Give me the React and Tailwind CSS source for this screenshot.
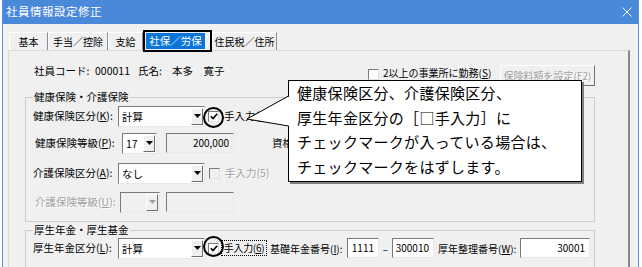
const jp = "font-['Noto_Sans_CJK_JP','Noto_Sans_CJK_SC',sans-serif]"

const Arrow = ({ gray }) => (
  <svg width="7" height="4" viewBox="0 0 7 4">
    <path d="M0 0h7L3.5 4z" fill={gray ? '#a0a0a0' : '#000'} />
  </svg>
)

const Sel = ({ className = '', text, disabled }) => (
  <div
    className={`flex h-[21px] border border-t-[#7a7a7a] border-l-[#7a7a7a] border-b-[#e8e8e8] border-r-[#e8e8e8] ${
      disabled ? 'bg-[#f0f0f0]' : 'bg-white'
    } ${className}`}
  >
    <div className="flex-1 pl-[3px] text-[10.5px] leading-[19px] whitespace-nowrap">{text}</div>
    <div className="w-[12px] my-[1px] mr-[1px] bg-[#f0f0f0] border border-t-white border-l-white border-b-[#6f6f6f] border-r-[#6f6f6f] flex items-center justify-center">
      <Arrow gray={disabled} />
    </div>
  </div>
)

const Check = ({ checked, disabled, className = '' }) => (
  <div
    className={`w-[11px] h-[11px] shrink-0 border border-t-[#7a7a7a] border-l-[#7a7a7a] border-b-[#e0e0e0] border-r-[#e0e0e0] ${
      disabled ? 'bg-[#f0f0f0]' : 'bg-white'
    } flex items-center justify-center ${className}`}
  >
    {checked && (
      <svg width="8" height="7" viewBox="0 0 8 7">
        <path d="M0.8 3.2 L3 5.6 L7.2 0.8" stroke="#000" strokeWidth="1.6" fill="none" />
      </svg>
    )}
  </div>
)

const Box = ({ className = '', text, gray }) => (
  <div
    className={`h-[20px] border border-t-[#7a7a7a] border-l-[#7a7a7a] border-b-[#e8e8e8] border-r-[#e8e8e8] ${
      gray ? 'bg-[#f0f0f0]' : 'bg-white'
    } text-right pr-[4px] text-[10px] leading-[18px] ${className}`}
  >
    {text}
  </div>
)

const Tab = ({ w, children }) => (
  <div
    className={`${w} mt-[2px] h-[18px] flex items-center justify-center whitespace-nowrap border-t border-l border-t-white border-l-white border-r border-r-[#8c8c8c] text-[10px]`}
  >
    {children}
  </div>
)

export default function App() {
  return (
    <div className={`w-[642px] h-[267px] bg-white relative overflow-hidden text-black ${jp}`}>
      <div className="ml-[2px] w-[637px] h-full bg-[#f0f0f0] border-x border-[#5a93dc] flex flex-col">
        {/* title bar */}
        <div className="h-[24px] shrink-0 bg-[#4a88da] flex items-center justify-between pl-[3px] pr-[6px]">
          <span className="text-white text-[11.5px] tracking-[0.5px]">社員情報設定修正</span>
          <svg width="10" height="10" viewBox="0 0 10 10">
            <path d="M0.5 0.5L9.5 9.5M9.5 0.5L0.5 9.5" stroke="#fff" strokeWidth="1" />
          </svg>
        </div>

        <div className="pl-[5px] pt-[6px]">
          {/* tabs */}
          <div className="flex items-start h-[20px] ml-[1px]">
            <Tab w="w-[39px]">基本</Tab>
            <Tab w="w-[60px]">手当／控除</Tab>
            <Tab w="w-[35px]">支給</Tab>
            <div className="relative z-10 w-[69px] h-[22px] border-2 border-black bg-[#f0f0f0] p-[1px] pr-[5px]">
              <div className="h-full bg-[#0a74da] text-white text-[10.5px] flex items-center justify-center whitespace-nowrap">
                社保／労保
              </div>
            </div>
            <Tab w="w-[65px]">住民税／住所</Tab>
          </div>

          {/* panel */}
          <div className="w-[622px] h-[230px] border-t border-l border-t-[#dadada] border-l-[#dadada] border-r-2 border-r-[#8a8a8a] pt-[13px] text-[10.5px]">
            <div className="flex items-start h-[21px] pl-[25px] leading-[14px]">
              <span className="w-[61px]">社員コード:</span>
              <span className="w-[43px]">000011</span>
              <span className="w-[34px]">氏名:</span>
              <span className="w-[196px]">本多　寛子</span>
              <Check className="mt-[5px]" />
              <span className="ml-[4px] mt-[2px] w-[117px] text-[10px] whitespace-nowrap">2以上の事業所に勤務(<u>S</u>)</span>
              <div className="mt-[1px] w-[95px] h-[21px] bg-[#f0f0f0] border border-t-white border-l-white border-b-[#6f6f6f] border-r-[#6f6f6f] flex items-center justify-center text-[10px] whitespace-nowrap text-[#a0a0a0] [text-shadow:1px_1px_0_#fff]">
                保険料額を設定(F2)
              </div>
            </div>

            <fieldset className="ml-[16px] mt-[5px] w-[570px] border border-[#cdcdcd] pl-[7px] pb-[8px]">
              <legend className="px-[1px] leading-[14px]">健康保険・介護保険</legend>
              <div className="flex items-center h-[22px] mt-[1px]">
                <span className="w-[85px] whitespace-nowrap">健康保険区分(<u>K</u>):</span>
                <Sel className="w-[87px]" text="計算" />
                <Check checked className="ml-[3px]" />
                <span className="ml-[5px] whitespace-nowrap">手入力(<u>4</u>)</span>
              </div>
              <div className="flex items-center h-[22px] mt-[5px]">
                <span className="w-[89px] pl-[2px] whitespace-nowrap">健康保険等級(<u>P</u>):</span>
                <Sel className="w-[35px]" text="17" />
                <Box className="ml-[9px] w-[68px]" text="200,000" gray />
                <span className="ml-[38px] whitespace-nowrap">資格</span>
              </div>
              <div className="flex items-center h-[22px] mt-[8px]">
                <span className="w-[85px] whitespace-nowrap">介護保険区分(<u>A</u>):</span>
                <Sel className="w-[87px]" text="なし" />
                <Check disabled className="ml-[4px]" />
                <span className="ml-[5px] whitespace-nowrap text-[#a0a0a0] [text-shadow:1px_1px_0_#fff]">手入力(5)</span>
              </div>
              <div className="flex items-center h-[22px] mt-[7px] text-[#a0a0a0]">
                <span className="w-[87px] pl-[2px] whitespace-nowrap [text-shadow:1px_1px_0_#fff]">介護保険等級(<u>U</u>):</span>
                <Sel className="w-[40px]" text="" disabled />
                <Box className="ml-[6px] w-[68px]" text="" gray />
              </div>
            </fieldset>

            <fieldset className="ml-[16px] mt-[1px] w-[570px] border border-[#cdcdcd] pl-[7px] pb-[8px]">
              <legend className="px-[1px] leading-[14px]">厚生年金・厚生基金</legend>
              <div className="flex items-center h-[22px] text-[10px]">
                <span className="w-[85px] whitespace-nowrap text-[10.5px]">厚生年金区分(<u>L</u>):</span>
                <Sel className="w-[87px]" text="計算" />
                <Check checked className="ml-[3px]" />
                <span className="ml-[2px] w-[46px] border border-dotted border-black whitespace-nowrap leading-[14px] text-center tracking-[-0.3px]">
                  手入力(<u>6</u>)
                </span>
                <span className="ml-[3px] w-[77px] whitespace-nowrap">基礎年金番号(<u>I</u>):</span>
                <Box className="w-[32px]" text="1111" />
                <span className="w-[13px] text-center">–</span>
                <Box className="w-[42px]" text="300010" />
                <span className="ml-[4px] w-[82px] whitespace-nowrap">厚年整理番号(<u>W</u>):</span>
                <Box className="w-[70px]" text="30001" />
              </div>
            </fieldset>
          </div>
        </div>
      </div>

      {/* annotation overlay */}
      <div className="absolute left-[203px] top-[107px] w-[21px] h-[21px] rounded-full border-2 border-black" />
      <div className="absolute left-[203px] top-[236px] w-[21px] h-[21px] rounded-full border-2 border-black" />

      <div className="absolute left-[288px] top-[80px] w-[294px] h-[102px] bg-white border border-black shadow-[2px_2px_0_#7f7f7f] pl-[8px] text-[15px] leading-[24.5px] tracking-[0.3px] whitespace-nowrap">
        <div>健康保険区分、介護保険区分、</div>
        <div>厚生年金区分の［□手入力］に</div>
        <div>チェックマークが入っている場合は、</div>
        <div>チェックマークをはずします。</div>
      </div>
      <svg className="absolute left-0 top-0 pointer-events-none" width="642" height="267">
        <polygon points="290,96 247,119 290,126" fill="#fff" />
        <polyline points="288.5,96 247,119 288.5,126" fill="none" stroke="#000" strokeWidth="1" />
      </svg>
    </div>
  )
}
